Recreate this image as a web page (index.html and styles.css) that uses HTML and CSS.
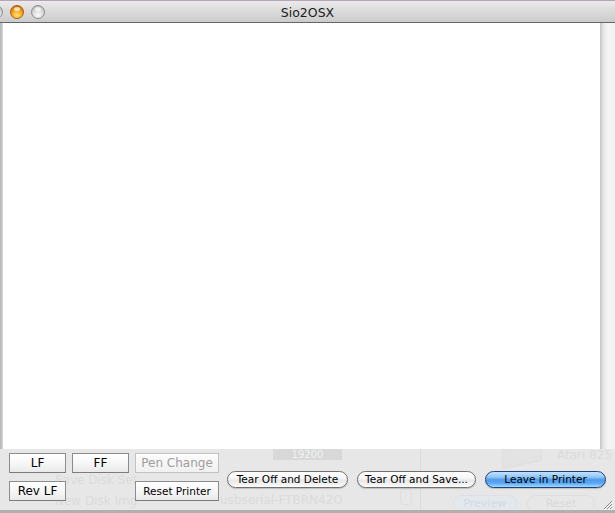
FILE: index.html
```html
<!DOCTYPE html>
<html lang="en">
<head>
<meta charset="utf-8">
<title>Sio2OSX</title>
<link rel="stylesheet" href="styles.css">
</head>
<body>
<div class="window">
  <header class="titlebar">
    <div class="lights">
      <span class="light gray"></span>
      <span class="light orange"></span>
      <span class="light gray"></span>
    </div>
    <div class="title">Sio2OSX</div>
    <div></div>
  </header>
  <main class="main">
    <div class="edge"></div>
    <div class="paper"></div>
    <div class="scroll"></div>
  </main>
  <footer class="panel">
    <div class="ghost" aria-hidden="true">
      <span class="g-text g-save">Save Disk Set</span>
      <span class="g-text g-new">New Disk Img</span>
      <span class="g-box">19200</span>
      <span class="g-text g-usb">usbserial-FTBRN42O</span>
      <span class="g-spin"></span>
      <span class="g-div"></span>
      <span class="g-printer"></span>
      <span class="g-text g-atari">Atari 825</span>
      <span class="g-pill g-preview">Preview</span>
      <span class="g-pill g-reset">Reset</span>
    </div>
    <div class="bevels">
      <button class="bevel">LF</button>
      <button class="bevel">FF</button>
      <button class="bevel disabled">Pen Change</button>
      <button class="bevel">Rev LF</button>
      <button class="bevel small col3">Reset Printer</button>
    </div>
    <div class="pills">
      <button class="pill">Tear Off and Delete</button>
      <button class="pill save">Tear Off and Save...</button>
      <button class="pill default">Leave in Printer</button>
    </div>
    <svg class="grip" width="11" height="11" viewBox="0 0 11 11">
      <path d="M10 2 L2 10 M10 5 L5 10 M10 8 L8 10" stroke="#8a8a8a" stroke-width="1" fill="none"/>
      <path d="M11 3 L3 11 M11 6 L6 11 M11 9 L9 11" stroke="#fafafa" stroke-width="1" fill="none"/>
    </svg>
  </footer>
</div>
</body>
</html>
```

FILE: styles.css
```css
* { box-sizing: border-box; }
html, body { margin: 0; padding: 0; }
body {
  width: 615px;
  height: 513px;
  overflow: hidden;
  background: #a8a8a8;
  font-family: "DejaVu Sans", "Noto Sans", sans-serif;
}
.window {
  display: flex;
  flex-direction: column;
  width: 615px;
  height: 513px;
}
.titlebar {
  flex: none;
  height: 23px;
  display: grid;
  grid-template-columns: 1fr auto 1fr;
  align-items: center;
  border-top: 1px solid #b4a6b4;
  border-bottom: 1px solid #666;
  background: linear-gradient(#ebebeb, #dadada 50%, #cccccc);
}
.lights {
  display: flex;
  gap: 7px;
  margin-left: -11px;
  padding-top: 1px;
}
.light {
  position: relative;
  width: 14px;
  height: 14px;
  border-radius: 50%;
}
.light::after {
  content: "";
  position: absolute;
  left: 3px;
  top: 1px;
  width: 6px;
  height: 4px;
  border-radius: 50%;
  background: rgba(255, 255, 255, 0.7);
}
.light.gray {
  border: 1px solid #8e8e8e;
  background: radial-gradient(circle at 50% 75%, #fafafa 0%, #dcdcdc 45%, #b4b4b4 90%);
}
.light.orange {
  border: 1px solid #a85a12;
  background: radial-gradient(circle at 50% 78%, #ffe675 0%, #fbae2a 40%, #e07a08 75%, #b45a04 100%);
}
.title {
  font-size: 12.5px;
  color: #1c1c1c;
  padding-top: 1px;
}
.main {
  flex: none;
  height: 426px;
  display: flex;
}
.edge {
  width: 3px;
  background: linear-gradient(to right, #b4b4b4, #c8c8c8 2px, #dedede);
}
.paper {
  flex: 1;
  background: #fff;
}
.scroll {
  width: 15px;
  background: linear-gradient(to right, #c4c4c4 0, #d8d8d8 2px, #e8e8e8 4px, #f5f5f5 8px, #f1f1f1 15px);
}
.panel {
  flex: 1;
  position: relative;
  overflow: hidden;
  display: flex;
  align-items: flex-start;
  padding: 4px 0 0 9px;
  background: #e7e7e7;
  border-bottom: 3px solid #b0b0b0;
}
.ghost {
  position: absolute;
  inset: 0;
  color: #dbdbdb;
  font-size: 12px;
}
.ghost > * { position: absolute; }
.g-text { white-space: nowrap; }
.g-save { left: 55px; top: 24px; }
.g-new { left: 55px; top: 45px; }
.g-box {
  left: 273px; top: 0; width: 69px; height: 11px;
  background: #d8d8d8; color: #eff4ef;
  font-size: 10px; text-align: center; line-height: 11px;
}
.g-usb { left: 220px; top: 44px; }
.g-spin {
  left: 400px; top: 40px; width: 12px; height: 16px;
  border: 1px solid #dedede; border-radius: 4px;
}
.g-div { left: 420px; top: 0; bottom: 0; width: 1px; background: #dbdbdb; }
.g-printer {
  left: 502px; top: -4px; width: 40px; height: 20px;
  border: 1px solid #dedede; background: #e3e3e3;
  transform: skewY(-12deg);
}
.g-atari { left: 557px; top: 0; font-size: 12px; line-height: 13px; }
.g-pill {
  top: 46px; height: 17px; border-radius: 9px;
  font-size: 11px; line-height: 15px; text-align: center;
}
.g-preview { left: 453px; width: 64px; border: 1px solid #dbe1e7; background: #e3e8ed; color: #d3dae2; }
.g-reset { left: 527px; width: 68px; border: 1px solid #dedede; color: #d9d9d9; }

.bevels {
  position: relative;
  display: grid;
  grid-template-columns: 57px 57px 84px;
  grid-template-rows: 20px 20px;
  gap: 8px 6px;
}
.bevel {
  margin: 0;
  padding: 0;
  font-family: inherit;
  font-size: 12px;
  line-height: 18px;
  color: #000;
  border: 1px solid #8c8c8c;
  border-bottom-color: #7c7c7c;
  border-radius: 0;
  background: linear-gradient(#ffffff, #f6f6f6 55%, #e9e9e9);
  box-shadow: inset 0 1px 0 #fff;
}
.bevel.small { font-size: 10.5px; }
.bevel.col3 { grid-column: 3; }
.bevel.disabled {
  color: #9d9d9d;
  border-color: #c2c2c2;
  background: linear-gradient(#fbfbfb, #f1f1f1);
}
.pills {
  position: relative;
  display: flex;
  gap: 9px;
  margin: 18px 0 0 8px;
}
.pill {
  width: 121px;
  height: 17px;
  margin: 0;
  padding: 0;
  font-family: inherit;
  font-size: 10.5px;
  line-height: 15px;
  color: #000;
  border: 1px solid #707070;
  border-radius: 9px;
  background: linear-gradient(#ffffff 0%, #f7f7f7 40%, #e8e8e8 55%, #f3f3f3 85%, #ffffff 100%);
  box-shadow: 0 1px 1px rgba(0, 0, 0, 0.18);
}
.pill.save { width: 119px; }
.pill.default {
  border-color: #23407c;
  background: linear-gradient(#c4e2ff 0%, #8ec4f6 35%, #4f98ea 52%, #5aa8f5 75%, #a2dcff 100%);
}
.grip {
  position: absolute;
  right: 2px;
  bottom: 0;
}
```
